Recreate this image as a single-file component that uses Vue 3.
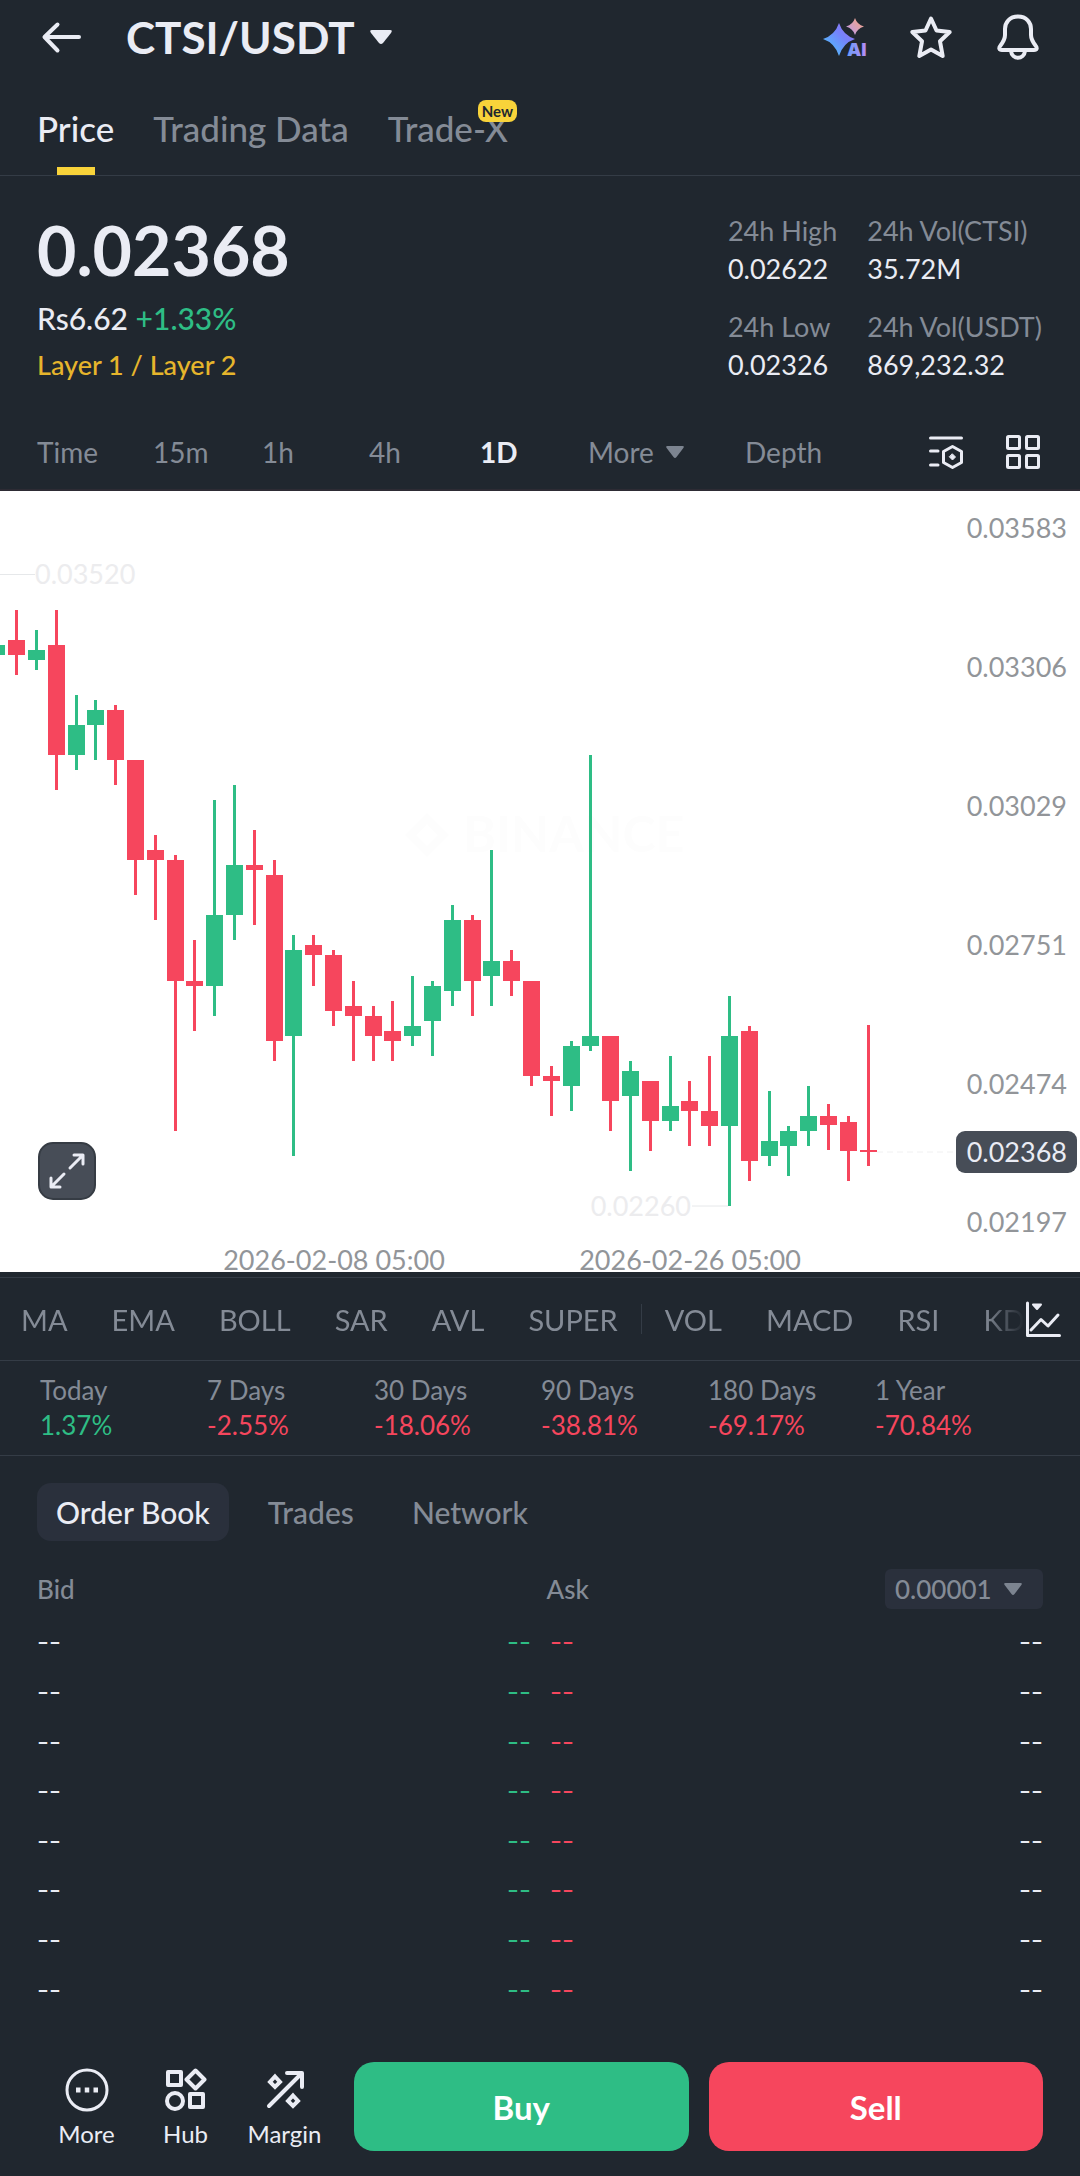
<!-- eslint-disable vue/multi-word-component-names -->
<template>
  <div class="market-page">
    <!-- Header -->
    <header class="top-bar">
      <button class="icon-btn" aria-label="Back">
        <svg width="44" height="44" viewBox="0 0 44 44" fill="none" stroke="currentColor" stroke-width="4" stroke-linecap="round" stroke-linejoin="round">
          <path d="M19.5 9.500 L6.500 22 L19.500 35.500 M7 22 H41" />
        </svg>
      </button>
      <button class="pair-btn">
        <h1>CTSI/USDT</h1>
        <svg width="22" height="14" viewBox="0 0 22 14" fill="currentColor" aria-hidden="true">
          <path d="M2 0 H20 Q23 0 21 3 L13 13 Q11 15 9 13 L1 3 Q-1 0 2 0 Z" />
        </svg>
      </button>
      <div class="top-actions">
        <button class="icon-btn" aria-label="AI">
          <svg width="48" height="48" viewBox="0 0 48 48">
            <defs>
              <linearGradient id="sparkBlue" x1="0" y1="1" x2="1" y2="0">
                <stop offset="0.2" stop-color="#56b4fb" />
                <stop offset="0.6" stop-color="#7582fb" />
                <stop offset="1" stop-color="#a070f0" />
              </linearGradient>
              <linearGradient id="sparkPink" x1="0" y1="1" x2="1" y2="0">
                <stop offset="0" stop-color="#b79af5" />
                <stop offset="1" stop-color="#fba678" />
              </linearGradient>
              <linearGradient id="aiText" x1="0" y1="0" x2="1" y2="0">
                <stop offset="0" stop-color="#6a9cfa" />
                <stop offset="1" stop-color="#b68cf5" />
              </linearGradient>
            </defs>
            <path d="M19 10 Q23 22 35 26 Q23 30 19 43 Q15 30 3 26 Q15 22 19 10 Z" fill="url(#sparkBlue)" />
            <path d="M35 5 Q37 11.500 44 13.500 Q37 15.500 35 22 Q33 15.500 26 13.500 Q33 11.500 35 5 Z" fill="url(#sparkPink)" />
            <text x="27" y="43" class="ai-text" fill="url(#aiText)">AI</text>
          </svg>
        </button>
        <button class="icon-btn" aria-label="Favorite">
          <svg width="48" height="48" viewBox="0 0 48 48" fill="none" stroke="currentColor" stroke-width="4" stroke-linejoin="round">
            <path d="M24 5.500 L29.500 17.500 L42.700 19 L33 28.300 L35.700 43 L24 36.500 L12.300 43 L15 28.300 L5.300 19 L18.500 17.500 Z" />
          </svg>
        </button>
        <button class="icon-btn" aria-label="Alerts">
          <svg width="48" height="48" viewBox="0 0 48 48" fill="none" stroke="currentColor" stroke-width="4" stroke-linejoin="round">
            <path d="M24 3.500 C15.500 3.500 11 9.500 11 16 V22 C11 26 9.500 28.500 6.500 32.500 C4.500 35 5 37 8 37 H40 C43 37 43.500 35 41.500 32.500 C38.500 28.500 37 26 37 22 V16 C37 9.500 32.500 3.500 24 3.500 Z" />
            <path d="M17 38 C18 47 30 47 31 38" />
          </svg>
        </button>
      </div>
    </header>

    <nav class="main-tabs">
      <a
        v-for="tab in mainTabs"
        :key="tab.name"
        href="#"
        class="main-tab"
        :class="{ active: tab.name === activeMainTab }"
        @click.prevent="activeMainTab = tab.name"
      >
        {{ tab.name }}<span v-if="tab.badge" class="badge">{{ tab.badge }}</span>
      </a>
    </nav>

    <!-- Price summary -->
    <section class="summary">
      <div>
        <div class="last-price">0.02368</div>
        <div class="fiat">Rs6.62 <span class="up">+1.33%</span></div>
        <a class="category" href="#">Layer 1 / Layer 2</a>
      </div>
      <dl class="stats">
        <div v-for="stat in stats" :key="stat.label">
          <dt>{{ stat.label }}</dt>
          <dd>{{ stat.value }}</dd>
        </div>
      </dl>
    </section>

    <!-- Chart intervals -->
    <div class="intervals">
      <div class="interval-list">
        <button
          v-for="item in intervals"
          :key="item"
          :class="{ active: item === activeInterval }"
          @click="activeInterval = item"
        >
          {{ item }}
          <svg v-if="item === 'More'" class="caret" viewBox="0 0 18 12" fill="currentColor" aria-hidden="true">
            <path d="M1.500 0 H16.500 Q19 0 17 2.500 L10.500 11 Q9 13 7.500 11 L1 2.500 Q-1 0 1.500 0 Z" />
          </svg>
        </button>
      </div>
      <button class="icon-btn" aria-label="Chart settings">
        <svg width="36" height="36" viewBox="0 0 36 36" fill="none" stroke="currentColor" stroke-width="3" stroke-linecap="round" stroke-linejoin="round">
          <path d="M2.500 4 H33.500 M2.500 17 H10 M2.500 31 H10" />
          <path d="M24.500 12.500 L33.500 17.500 V28.500 L24.500 33.500 L15.500 28.500 V17.500 Z" />
          <path d="M24.500 20 L27.500 23 L24.500 26 L21.500 23 Z" fill="currentColor" stroke-width="1" />
        </svg>
      </button>
      <button class="icon-btn" aria-label="Layout">
        <svg width="36" height="36" viewBox="0 0 36 36" fill="none" stroke="currentColor" stroke-width="3">
          <rect x="2.500" y="2.500" width="12" height="12" rx="1" />
          <rect x="21.500" y="2.500" width="12" height="12" rx="1" />
          <rect x="2.500" y="21.500" width="12" height="12" rx="1" />
          <rect x="21.500" y="21.500" width="12" height="12" rx="1" />
        </svg>
      </button>
    </div>

    <!-- Candlestick chart -->
    <section class="chart">
      <svg class="chart-svg" viewBox="0 0 1080 781" role="img" aria-label="CTSI/USDT 1D chart">
        <g class="watermark">
          <path d="M427 322 L449 344 L427 366 L405 344 Z M427 333 L416 344 L427 355 L438 344 Z" fill-rule="evenodd" />
          <text x="463" y="361">BINANCE</text>
        </g>

        <path d="M0 83.500 H35 M692 715 H728" class="marker-line" />
        <text x="35" y="93" class="marker">0.03520</text>
        <text x="691" y="725" text-anchor="end" class="marker">0.02260</text>

        <line x1="877" x2="956" y1="661" y2="661" class="current-line" />

        <g v-for="candle in candles" :key="candle.x" :class="candle.up ? 'candle-up' : 'candle-down'">
          <rect :x="candle.x - 1" :y="candle.high" width="3" :height="candle.low - candle.high" />
          <rect :x="candle.x - 8" :y="candle.top" width="17" :height="candle.height" />
        </g>

        <text v-for="tick in priceTicks" :key="tick.label" x="1067" :y="tick.y" text-anchor="end" class="axis">
          {{ tick.label }}
        </text>
        <text x="334" y="779" text-anchor="middle" class="axis">2026-02-08 05:00</text>
        <text x="690" y="779" text-anchor="middle" class="axis">2026-02-26 05:00</text>

        <rect x="956" y="640" width="121" height="42" rx="9" class="price-tag" />
        <text x="1067" y="671" text-anchor="end" class="axis price-tag-text">0.02368</text>
      </svg>
      <button class="expand-btn" aria-label="Full screen">
        <svg width="36" height="36" viewBox="0 0 36 36" fill="none" stroke="currentColor" stroke-width="3" stroke-linecap="round" stroke-linejoin="round">
          <path d="M21 15 L33.500 2.500 M25 2 H34 V11 M15 21 L2.500 33.500 M2 25 V34 H11" />
        </svg>
      </button>
    </section>

    <!-- Indicators -->
    <div class="indicators">
      <div class="indicator-list">
        <button v-for="name in mainIndicators" :key="name">{{ name }}</button>
        <span class="divider"></span>
        <button v-for="name in subIndicators" :key="name">{{ name }}</button>
      </div>
      <button class="icon-btn" aria-label="Indicator settings">
        <svg width="38" height="38" viewBox="0 0 38 38" fill="none" stroke="currentColor" stroke-width="3" stroke-linecap="round" stroke-linejoin="round">
          <path d="M3.500 3 V35.500 H35.500" />
          <path d="M7 30 L17 19.500 L24 26 L34 15" />
          <path d="M9 4.500 H17 L13 9 Z" fill="currentColor" stroke-width="2" />
        </svg>
      </button>
    </div>

    <!-- Performance by period -->
    <dl class="performance">
      <div v-for="item in performance" :key="item.label">
        <dt>{{ item.label }}</dt>
        <dd :class="item.value.startsWith('-') ? 'down' : 'up'">{{ item.value }}</dd>
      </div>
    </dl>

    <!-- Order book -->
    <div class="book-tabs">
      <button
        v-for="tab in bookTabs"
        :key="tab"
        :class="{ active: tab === activeBookTab }"
        @click="activeBookTab = tab"
      >
        {{ tab }}
      </button>
    </div>

    <section class="book">
      <div class="book-head">
        <span>Bid</span>
        <span>Ask</span>
        <div class="precision">
          <select v-model="precision" aria-label="Price precision">
            <option v-for="step in precisions" :key="step">{{ step }}</option>
          </select>
          <svg class="caret" viewBox="0 0 18 12" fill="currentColor" aria-hidden="true">
            <path d="M1.500 0 H16.500 Q19 0 17 2.500 L10.500 11 Q9 13 7.500 11 L1 2.500 Q-1 0 1.500 0 Z" />
          </svg>
        </div>
      </div>
      <table class="book-table">
        <tbody>
          <tr v-for="row in 8" :key="row">
            <td>--</td>
            <td class="bid-price up">--</td>
            <td class="ask-price down">--</td>
            <td class="ask-amount">--</td>
          </tr>
        </tbody>
      </table>
    </section>

    <!-- Trade actions -->
    <footer class="actions">
      <div class="shortcuts">
        <button>
          <svg width="44" height="44" viewBox="0 0 44 44" fill="none" stroke="currentColor" stroke-width="3">
            <circle cx="22" cy="22" r="20" />
            <path d="M11 22 H15.500 M19.750 22 H24.250 M28.500 22 H33" stroke-width="5" />
          </svg>
          More
        </button>
        <button>
          <svg width="44" height="44" viewBox="0 0 44 44" fill="none" stroke="currentColor" stroke-width="4" stroke-linejoin="round">
            <rect x="4" y="4" width="13" height="13" />
            <path d="M31.500 2.500 L40.500 11.500 L31.500 20.500 L22.500 11.500 Z" />
            <circle cx="11" cy="33" r="8" />
            <rect x="26" y="26" width="13" height="13" />
          </svg>
          Hub
        </button>
        <button>
          <svg width="44" height="44" viewBox="0 0 44 44" fill="none" stroke="currentColor" stroke-width="4" stroke-linecap="round" stroke-linejoin="round">
            <path d="M6 38 L38 6 M24 5 H39 V19" />
            <path d="M12 8.500 L17 14 L12 19 L7 14 Z M30 27.500 L35 33 L30 38 L25 33 Z" stroke-linejoin="miter" />
          </svg>
          Margin
        </button>
      </div>
      <button class="trade-btn buy">Buy</button>
      <button class="trade-btn sell">Sell</button>
    </footer>
  </div>
</template>

<script setup>
import { computed, ref } from 'vue'

const mainTabs = [
  { name: 'Price' },
  { name: 'Trading Data' },
  { name: 'Trade-X', badge: 'New' }
]
const activeMainTab = ref('Price')

const stats = [
  { label: '24h High', value: '0.02622' },
  { label: '24h Vol(CTSI)', value: '35.72M' },
  { label: '24h Low', value: '0.02326' },
  { label: '24h Vol(USDT)', value: '869,232.32' }
]

const intervals = ['Time', '15m', '1h', '4h', '1D', 'More', 'Depth']
const activeInterval = ref('1D')

const mainIndicators = ['MA', 'EMA', 'BOLL', 'SAR', 'AVL', 'SUPER']
const subIndicators = ['VOL', 'MACD', 'RSI', 'KDJ']

const performance = [
  { label: 'Today', value: '1.37%' },
  { label: '7 Days', value: '-2.55%' },
  { label: '30 Days', value: '-18.06%' },
  { label: '90 Days', value: '-38.81%' },
  { label: '180 Days', value: '-69.17%' },
  { label: '1 Year', value: '-70.84%' }
]

const bookTabs = ['Order Book', 'Trades', 'Network']
const activeBookTab = ref('Order Book')

const precisions = ['0.00001', '0.0001', '0.001']
const precision = ref('0.00001')

const priceTicks = [
  { label: '0.03583', y: 47 },
  { label: '0.03306', y: 186 },
  { label: '0.03029', y: 325 },
  { label: '0.02751', y: 464 },
  { label: '0.02474', y: 603 },
  { label: '0.02197', y: 741 }
]

// open, high, low, close in units of 0.00001
const klines = [
  [3360, 3380, 3360, 3380],
  [3390, 3450, 3320, 3360],
  [3350, 3410, 3330, 3370],
  [3380, 3450, 3090, 3160],
  [3160, 3280, 3130, 3220],
  [3220, 3270, 3150, 3250],
  [3250, 3260, 3100, 3150],
  [3150, 3150, 2880, 2950],
  [2970, 3000, 2830, 2950],
  [2950, 2960, 2410, 2710],
  [2710, 2790, 2610, 2700],
  [2700, 3070, 2640, 2840],
  [2840, 3100, 2790, 2940],
  [2940, 3010, 2820, 2930],
  [2920, 2950, 2550, 2590],
  [2600, 2800, 2360, 2770],
  [2780, 2800, 2700, 2760],
  [2760, 2770, 2620, 2650],
  [2660, 2710, 2550, 2640],
  [2640, 2660, 2550, 2600],
  [2610, 2670, 2550, 2590],
  [2600, 2720, 2580, 2620],
  [2630, 2710, 2560, 2700],
  [2690, 2860, 2660, 2830],
  [2830, 2840, 2640, 2710],
  [2720, 2970, 2660, 2750],
  [2750, 2770, 2680, 2710],
  [2710, 2710, 2500, 2520],
  [2520, 2540, 2440, 2510],
  [2500, 2590, 2450, 2580],
  [2580, 3160, 2570, 2600],
  [2600, 2600, 2410, 2470],
  [2480, 2550, 2330, 2530],
  [2510, 2510, 2370, 2430],
  [2430, 2560, 2410, 2460],
  [2470, 2510, 2380, 2450],
  [2450, 2560, 2380, 2420],
  [2420, 2680, 2260, 2600],
  [2610, 2620, 2310, 2350],
  [2360, 2490, 2340, 2390],
  [2380, 2420, 2320, 2410],
  [2410, 2500, 2380, 2440],
  [2440, 2463, 2372, 2421],
  [2427, 2440, 2310, 2369],
  [2371, 2622, 2340, 2368]
]

const priceToY = (price) => Math.round(83.5 + (3520 - price) * 0.5013)

const candles = computed(() =>
  klines.map(([open, high, low, close], index) => {
    const top = priceToY(Math.max(open, close))
    return {
      x: Math.round(index * 19.8 - 3.6),
      up: close > open,
      high: priceToY(high),
      low: priceToY(low),
      top,
      height: Math.max(priceToY(Math.min(open, close)) - top, 2)
    }
  })
)
</script>

<style>
body {
  margin: 0;
  background: #20272f;
}
</style>

<style scoped>
.market-page {
  display: flex;
  flex-direction: column;
  min-height: 100vh;
  background: #20272f;
  color: #eaecf4;
  font-family: Lato, 'Open Sans', sans-serif;
  font-size: 26px;
}

button,
select {
  padding: 0;
  border: none;
  background: none;
  color: inherit;
  font: inherit;
  cursor: pointer;
}

a {
  color: inherit;
  text-decoration: none;
}

svg {
  display: block;
  flex-shrink: 0;
}

dl,
dd,
h1 {
  margin: 0;
}

.up {
  color: #2ebd85;
}

.down {
  color: #f6465d;
}

.caret {
  width: 18px;
  height: 12px;
  color: #7c8490;
}

/* Header */
.top-bar {
  display: flex;
  align-items: center;
  height: 74px;
  padding: 0 38px;
}

.pair-btn {
  display: flex;
  align-items: center;
  gap: 15px;
  margin-left: 44px;
}

.pair-btn h1 {
  font-size: 44px;
  font-weight: 700;
  line-height: 48px;
}

.top-actions {
  display: flex;
  gap: 39px;
  margin-left: auto;
}

.ai-text {
  font-family: Inter, sans-serif;
  font-size: 18px;
  font-weight: 900;
}

.main-tabs {
  display: flex;
  gap: 39px;
  height: 101px;
  padding: 0 37px;
  border-bottom: 1px solid #343c46;
}

.main-tab {
  position: relative;
  display: flex;
  align-items: center;
  padding-top: 7px;
  color: #848b96;
  font-size: 35px;
  font-weight: 500;
}

.main-tab.active {
  color: #eaecf4;
}

.main-tab.active::after {
  content: '';
  position: absolute;
  bottom: 0;
  left: 50%;
  width: 38px;
  height: 8px;
  margin-left: -19px;
  background: #f8d33a;
}

.badge {
  position: absolute;
  top: 26px;
  right: -9px;
  padding: 0 4px;
  border-radius: 8px;
  background: #f8d33a;
  color: #20272f;
  font-size: 15px;
  font-weight: 700;
  line-height: 22px;
}

/* Price summary */
.summary {
  display: flex;
  justify-content: space-between;
  align-items: flex-start;
  padding: 36px 38px 29px 37px;
}

.last-price {
  font-size: 68px;
  font-weight: 700;
  line-height: 76px;
}

.fiat {
  margin-top: 9px;
  font-size: 30px;
  font-weight: 500;
  line-height: 42px;
}

.category {
  display: block;
  margin-top: 5px;
  color: #e6b52c;
  font-size: 27px;
  font-weight: 500;
  line-height: 42px;
}

.stats {
  display: grid;
  grid-template-columns: auto auto;
  gap: 20px 30px;
  font-size: 27px;
  line-height: 38px;
}

.stats dt,
.performance dt {
  color: #848b96;
}

/* Intervals */
.intervals {
  display: flex;
  align-items: center;
  gap: 41px;
  height: 74px;
  padding: 0 39px 0 37px;
  border-bottom: 2px solid #2d2b34;
}

.interval-list {
  display: grid;
  flex: 1;
  grid-template-columns: 116fr 109fr 107fr 111fr 108fr 157fr 142fr;
}

.interval-list button {
  display: flex;
  align-items: center;
  gap: 12px;
  color: #848b96;
  font-size: 28px;
}

.interval-list button.active {
  color: #eaecf4;
  font-weight: 700;
}

/* Chart */
.chart {
  position: relative;
  background: #fff;
}

.chart-svg {
  width: 100%;
  overflow: visible;
}

.candle-up {
  fill: #2ebd85;
}

.candle-down {
  fill: #f6465d;
}

.axis {
  fill: #929599;
  font-size: 27px;
}

.marker {
  fill: #ececee;
  font-size: 27px;
}

.marker-line {
  stroke: #e6e8ea;
  stroke-width: 1;
}

.current-line {
  stroke: #f0f0f1;
  stroke-dasharray: 6 4;
}

.watermark {
  fill: #fdfdfd;
  font-size: 50px;
  font-weight: 700;
}

.price-tag {
  fill: #474d57;
}

.price-tag-text {
  fill: #eaecf4;
}

.expand-btn {
  position: absolute;
  bottom: 72px;
  left: 38px;
  display: flex;
  align-items: center;
  justify-content: center;
  width: 58px;
  height: 58px;
  border: 2px solid #363c44;
  border-radius: 15px;
  background: #474d57;
}

/* Indicators */
.indicators {
  display: flex;
  align-items: center;
  height: 82px;
  margin-top: 5px;
  padding: 0 18px 0 21px;
  border-top: 1px solid #343c46;
  border-bottom: 1px solid #343c46;
}

.indicator-list {
  display: flex;
  flex: 1;
  align-items: center;
  gap: 44px;
  min-width: 0;
  overflow: hidden;
  color: #848b96;
  font-size: 29px;
  mask-image: linear-gradient(to right, #000 calc(100% - 40px), transparent);
}

.indicator-list button {
  flex-shrink: 0;
}

.divider {
  flex-shrink: 0;
  width: 1px;
  height: 30px;
  margin: 0 -21px;
  background: #343c46;
}

/* Performance */
.performance {
  display: grid;
  grid-template-columns: repeat(6, 1fr);
  padding: 12px 38px 12px 40px;
  border-bottom: 1px solid #343c46;
  line-height: 35px;
}

/* Order book */
.book-tabs {
  display: flex;
  gap: 20px;
  padding: 27px 37px 0;
}

.book-tabs button {
  height: 58px;
  padding: 0 19px;
  border-radius: 14px;
  color: #848b96;
  font-size: 30px;
  font-weight: 500;
}

.book-tabs button.active {
  background: #2a303c;
  color: #eaecf4;
}

.book {
  padding: 28px 37px 0;
}

.book-head {
  display: grid;
  grid-template-columns: 509fr 338fr auto;
  align-items: center;
  color: #848b96;
  font-weight: 500;
}

.precision {
  position: relative;
}

.precision select {
  display: block;
  width: 158px;
  height: 40px;
  padding: 0 10px;
  border-radius: 6px;
  background: #2a303c;
  appearance: none;
}

.precision .caret {
  position: absolute;
  top: 14px;
  right: 21px;
  pointer-events: none;
}

.book-table {
  width: 100%;
  height: 397px;
  margin-top: 8px;
  border-collapse: collapse;
  font-family: Inter, sans-serif;
}

.book-table td {
  width: 25%;
  padding: 0;
}

.book-table .bid-price {
  padding-right: 9px;
  text-align: right;
}

.book-table .ask-price {
  padding-left: 10px;
}

.book-table .ask-amount {
  text-align: right;
}

/* Bottom actions */
.actions {
  display: flex;
  gap: 20px;
  margin-top: auto;
  padding: 20px 37px 25px;
}

.shortcuts {
  display: flex;
}

.shortcuts button {
  display: flex;
  flex-direction: column;
  align-items: center;
  gap: 7px;
  width: 99px;
  padding-top: 6px;
  font-size: 24px;
  line-height: 29px;
}

.trade-btn {
  flex: 1;
  height: 89px;
  border-radius: 20px;
  color: #fff;
  font-size: 33px;
  font-weight: 700;
}

.buy {
  background: #2ebd85;
}

.sell {
  background: #f6465d;
}
</style>
